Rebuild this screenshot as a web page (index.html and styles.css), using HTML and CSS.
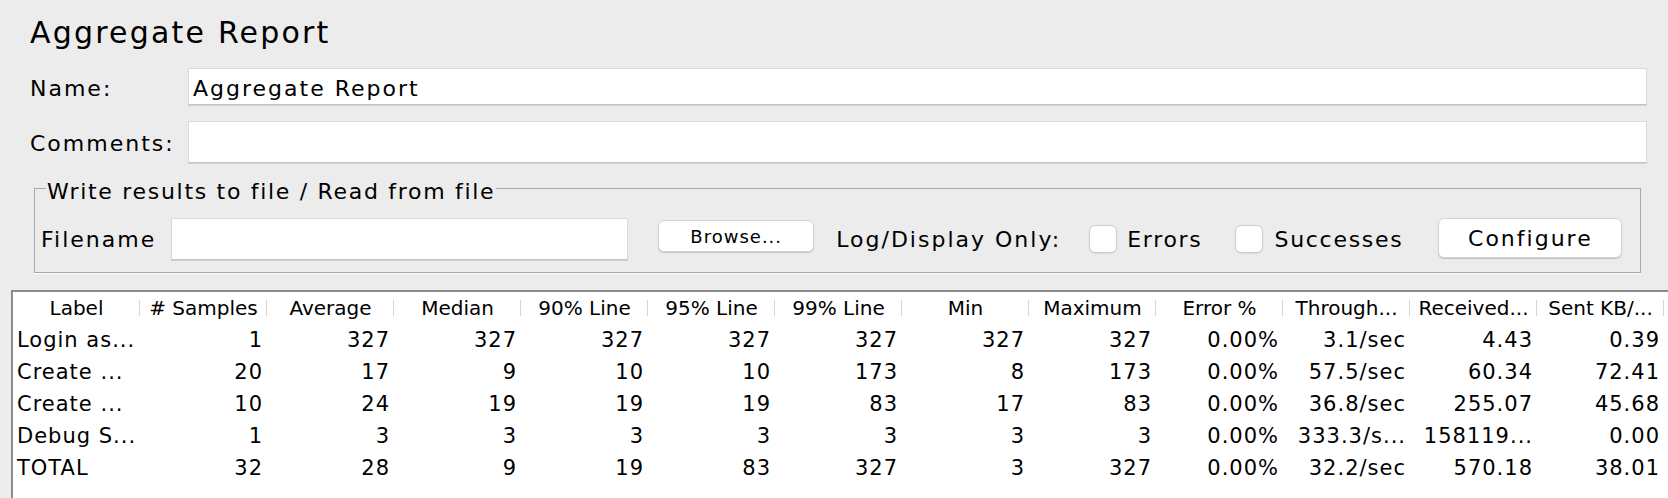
FILE: index.html
```html
<!DOCTYPE html>
<html>
<head>
<meta charset="utf-8">
<title>Aggregate Report</title>
<link rel="stylesheet" href="styles.css">
</head>
<body>
<div class="panel">
  <h1 class="title">Aggregate Report</h1>
  <div class="form-row name-row">
    <div class="form-label">Name:</div>
    <div class="field name-field">Aggregate Report</div>
  </div>
  <div class="form-row comments-row">
    <div class="form-label">Comments:</div>
    <div class="field comments-field"></div>
  </div>
  <fieldset class="filebox">
    <legend class="filebox-legend">Write results to file / Read from file</legend>
    <div class="file-row">
      <span class="ui-text filename-label">Filename</span>
      <div class="field file-field"></div>
      <div class="btn btn-browse">Browse...</div>
      <span class="ui-text log-label">Log/Display Only:</span>
      <span class="checkbox cb-errors"></span>
      <span class="ui-text cb-text-errors">Errors</span>
      <span class="checkbox cb-successes"></span>
      <span class="ui-text cb-text-successes">Successes</span>
      <div class="btn btn-configure">Configure</div>
    </div>
  </fieldset>
</div>
<div class="table-wrap">
  <table class="report">
    <thead>
      <tr>
        <th>Label</th><th># Samples</th><th>Average</th><th>Median</th><th>90% Line</th><th>95% Line</th><th>99% Line</th><th>Min</th><th>Maximum</th><th>Error %</th><th>Through...</th><th>Received...</th><th>Sent KB/...</th>
      </tr>
    </thead>
    <tbody>
      <tr><td class="lbl">Login as...</td><td>1</td><td>327</td><td>327</td><td>327</td><td>327</td><td>327</td><td>327</td><td>327</td><td>0.00%</td><td>3.1/sec</td><td>4.43</td><td>0.39</td></tr>
      <tr><td class="lbl">Create ...</td><td>20</td><td>17</td><td>9</td><td>10</td><td>10</td><td>173</td><td>8</td><td>173</td><td>0.00%</td><td>57.5/sec</td><td>60.34</td><td>72.41</td></tr>
      <tr><td class="lbl">Create ...</td><td>10</td><td>24</td><td>19</td><td>19</td><td>19</td><td>83</td><td>17</td><td>83</td><td>0.00%</td><td>36.8/sec</td><td>255.07</td><td>45.68</td></tr>
      <tr><td class="lbl">Debug S...</td><td>1</td><td>3</td><td>3</td><td>3</td><td>3</td><td>3</td><td>3</td><td>3</td><td>0.00%</td><td>333.3/s...</td><td>158119...</td><td>0.00</td></tr>
      <tr><td class="lbl">TOTAL</td><td>32</td><td>28</td><td>9</td><td>19</td><td>83</td><td>327</td><td>3</td><td>327</td><td>0.00%</td><td>32.2/sec</td><td>570.18</td><td>38.01</td></tr>
    </tbody>
  </table>
</div>
</body>
</html>
```

FILE: styles.css
```css
html, body {
  margin: 0;
  padding: 0;
}
body {
  background: #ececec;
  color: #000;
  font-family: "DejaVu Sans", "Liberation Sans", sans-serif;
  font-size: 22px;
  letter-spacing: 2px;
  height: 100vh;
  display: flex;
  flex-direction: column;
  overflow: hidden;
}
.panel {
  padding: 15px 21px 0 30px;
}
.title {
  margin: 0;
  font-size: 30px;
  line-height: 36px;
  font-weight: normal;
  letter-spacing: 2.2px;
}
.form-row {
  display: flex;
  align-items: center;
  margin-top: 16px;
}
.name-row {
  margin-top: 17px;
}
.form-label {
  width: 158px;
  flex: none;
  line-height: 24px;
  padding-top: 4px;
  white-space: nowrap;
}
.field {
  box-sizing: border-box;
  background: #fff;
  border: 1px solid #dadada;
  border-bottom-color: #c4c4c4;
  box-shadow: 0 1px 0 #d2d2d2;
  line-height: 24px;
  white-space: nowrap;
}
.name-field {
  flex: 1;
  height: 37px;
  padding: 8px 4px 0 4px;
}
.comments-field {
  flex: 1;
  height: 42px;
}
.filebox {
  margin: 9px 6px 0 4px;
  padding: 14px 10px 12px 6px;
  border: 1px solid #a8a8a8;
  box-shadow: 0 1px 0 #fff;
  min-width: 0;
}
.filebox-legend {
  margin-left: 5px;
  padding: 8px 1px 0 1px;
  line-height: 24px;
  letter-spacing: 1.7px;
}
.file-row {
  display: flex;
  align-items: center;
  height: 42px;
}
.ui-text {
  line-height: 24px;
  padding-top: 2px;
  white-space: nowrap;
}
.filename-label {
  margin-right: 15px;
}
.file-field {
  width: 457px;
  height: 42px;
  flex: none;
}
.btn {
  box-sizing: border-box;
  background: #fff;
  border: 1px solid #d4d4d4;
  border-radius: 6px;
  box-shadow: 0 1px 1px rgba(0, 0, 0, 0.18);
  display: flex;
  align-items: center;
  justify-content: center;
  flex: none;
  white-space: nowrap;
}
.btn-browse {
  margin-left: 30px;
  width: 156px;
  height: 32px;
  margin-bottom: 6px;
  font-size: 18px;
  letter-spacing: 1px;
}
.log-label {
  margin-left: 22px;
}
.checkbox {
  box-sizing: border-box;
  width: 28px;
  height: 28px;
  flex: none;
  background: #fff;
  border: 1px solid #cdcdcd;
  border-radius: 6px;
  box-shadow: 0 1px 1px rgba(0, 0, 0, 0.08);
}
.cb-errors {
  margin-left: 28px;
}
.cb-text-errors {
  margin-left: 10px;
  letter-spacing: 1.7px;
}
.cb-successes {
  margin-left: 32px;
}
.cb-text-successes {
  margin-left: 12px;
  letter-spacing: 1.7px;
}
.btn-configure {
  margin-left: 35px;
  width: 184px;
  height: 40px;
  margin-bottom: 2px;
}
.table-wrap {
  flex: 1;
  margin: 17px 0 0 11px;
  background: #fff;
  border-top: 2px solid #8c8c8c;
  border-left: 2px solid #8c8c8c;
  overflow: hidden;
}
.report {
  border-collapse: collapse;
  table-layout: fixed;
  width: 1651px;
}
.report th,
.report td {
  width: 127px;
  height: 32px;
  padding: 0;
  white-space: nowrap;
  overflow: hidden;
}
.report th {
  font-weight: normal;
  font-size: 20px;
  letter-spacing: 0;
  text-align: center;
  line-height: 32px;
  background: linear-gradient(#d6d6d6, #d6d6d6) right center / 1px 16px no-repeat;
}
.report td {
  font-size: 21px;
  letter-spacing: 1px;
  line-height: 32px;
  text-align: right;
  padding-right: 4px;
}
.report td.lbl {
  text-align: left;
  padding: 0 0 0 4px;
}
```
